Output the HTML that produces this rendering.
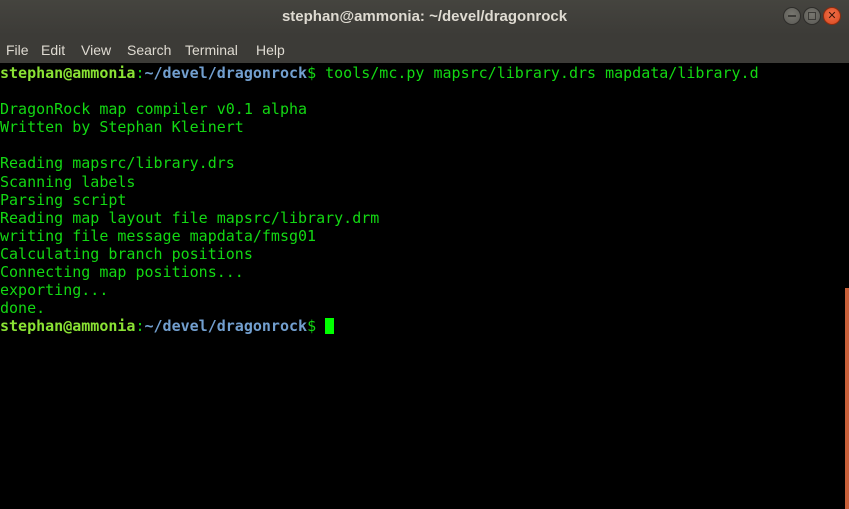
<!DOCTYPE html>
<html><head><style>
html,body{margin:0;padding:0;width:849px;height:509px;overflow:hidden;background:#000}
#title{position:absolute;left:0;top:0;width:849px;height:35px;background:linear-gradient(#45443f,#3c3b37);color:#dfdbd2;font:bold 15px "Liberation Sans",sans-serif;text-align:center;line-height:34px}
.btn{position:absolute;top:7px;width:18px;height:18px;border-radius:50%;background:radial-gradient(circle at 50% 40%,#77766f,#5a5954);border:1px solid #2e2d2a;box-sizing:border-box}
#menu{position:absolute;left:0;top:35px;width:849px;height:28px;background:#3c3b37;color:#dfdbd2;font:14px "Liberation Sans",sans-serif;line-height:30px}
#menu span{position:absolute}
#term{position:absolute;left:0;top:64px;width:849px;height:445px;background:#000;font:15px "DejaVu Sans Mono","Liberation Mono",monospace;line-height:18.1px;color:#13d813;white-space:pre}
.u{color:#8ae234;font-weight:bold}.p{color:#729fcf;font-weight:bold}
#cur{display:inline-block;width:9px;height:16px;background:#00ff00;vertical-align:-3px}
#sb{position:absolute;left:845px;top:288px;width:4px;height:221px;background:#c8603a}
</style></head><body>
<div id="title">stephan@ammonia: ~/devel/dragonrock</div>
<div class="btn" style="left:783px"><div style="position:absolute;left:4px;top:7px;width:8px;height:2px;background:#3c3b37"></div></div>
<div class="btn" style="left:803px"><div style="position:absolute;left:4px;top:4px;width:6px;height:6px;border:1px solid #3c3b37"></div></div>
<div class="btn" style="left:823px;background:radial-gradient(circle at 50% 40%,#f2704a,#d9481e);border-color:#8a2c10"><div style="position:absolute;left:0;top:0;width:16px;height:16px;color:#3c1508;font:bold 11px 'DejaVu Sans',sans-serif;text-align:center;line-height:16px">✕</div></div>
<div id="menu"><span style="left:6px">File</span><span style="left:41px">Edit</span><span style="left:81px">View</span><span style="left:127px">Search</span><span style="left:185px">Terminal</span><span style="left:256px">Help</span></div>
<div id="term"><span class="u">stephan@ammonia</span>:<span class="p">~/devel/dragonrock</span>$ tools/mc.py mapsrc/library.drs mapdata/library.d

DragonRock map compiler v0.1 alpha
Written by Stephan Kleinert

Reading mapsrc/library.drs
Scanning labels
Parsing script
Reading map layout file mapsrc/library.drm
writing file message mapdata/fmsg01
Calculating branch positions
Connecting map positions...
exporting...
done.
<span class="u">stephan@ammonia</span>:<span class="p">~/devel/dragonrock</span>$ <span id="cur"></span></div>
<div id="sb"></div>
</body></html>
